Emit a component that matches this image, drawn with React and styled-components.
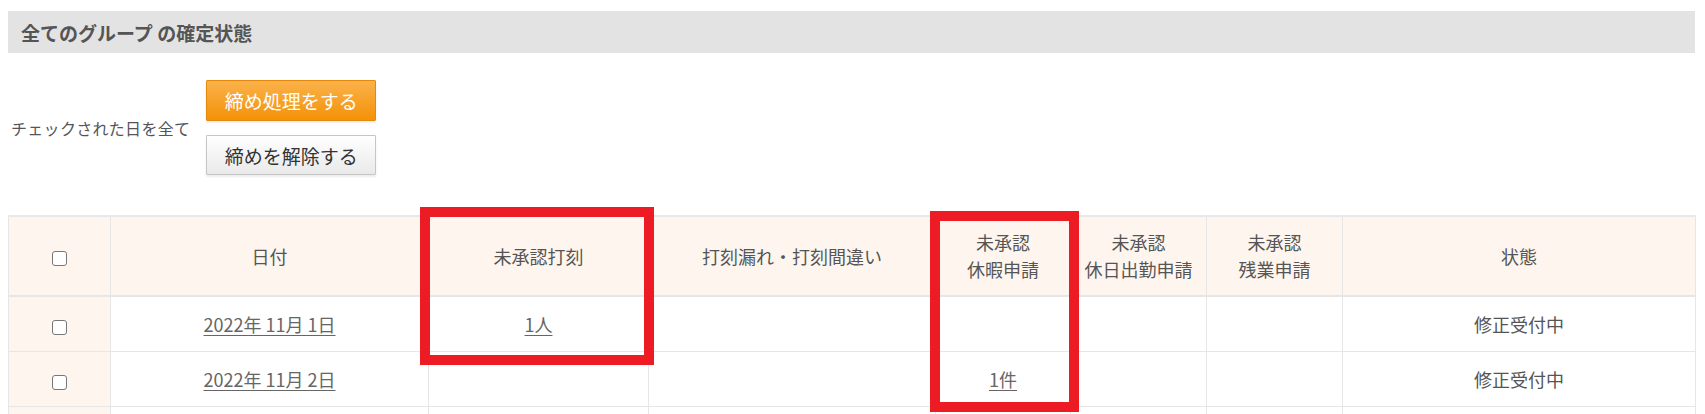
import React from "react";
import styled, { createGlobalStyle } from "styled-components";

const Global = createGlobalStyle`
  html, body { margin:0; padding:0; background:#fff; }
  body { font-family:"Noto Sans CJK JP", "Noto Sans", sans-serif; color:#555; }
`;

const Page = styled.div`
  padding:11px 10px 0 8px;
  height:414px;
  box-sizing:border-box;
  overflow:hidden;
`;

const TitleBar = styled.div`
  background:#e3e3e3;
  height:42px;
  display:flex;
  align-items:center;
  padding-left:13px;
  font-size:19px;
  font-weight:700;
  color:#555;
`;

const Controls = styled.div`
  display:flex;
  align-items:center;
  gap:16px;
  margin-top:27px;
  padding-left:3px;
`;

const Label = styled.div`font-size:16px; letter-spacing:0.3px; color:#555;`;

const BtnStack = styled.div`
  display:flex;
  flex-direction:column;
  gap:14px;
`;

const Btn = styled.button`
  font-family:inherit;
  font-size:19px;
  width:170px;
  height:${p => (p.primary ? "41px" : "40px")};
  padding:0;
  border-radius:1px;
  cursor:pointer;
  border:1px solid ${p => (p.primary ? "#e5890e" : "#c6c6c6")};
  color:${p => (p.primary ? "#fff" : "#333")};
  background:${p =>
    p.primary
      ? "linear-gradient(180deg, #fbb24a 0%, #f39208 100%)"
      : "linear-gradient(180deg, #ffffff 0%, #e9e9e9 100%)"};
  box-shadow:0 2px 2px rgba(0,0,0,0.08);
`;

const TableWrap = styled.div`
  position:relative;
  margin-top:40px;
`;

const Table = styled.table`
  width:1687px;
  table-layout:fixed;
  border-collapse:collapse;
  font-size:18px;
  color:#555;
  border-top:2px solid #e8e8e8;
`;

const Th = styled.th`
  font-weight:400;
  background:#fef5ef;
  border:1px solid #e6e6e6;
  border-bottom:2px solid #e6e6e6;
  height:78px;
  line-height:27px;
  text-align:center;
  padding:0;
`;

const Td = styled.td`
  border:1px solid #e6e6e6;
  height:54px;
  text-align:center;
  padding:0;
  background:${p => (p.check ? "#fef5ef" : "#fff")};
`;

const Box = styled.span`
  display:inline-block;
  width:13px;
  height:13px;
  border:1.5px solid #777;
  border-radius:3px;
  background:#fff;
  vertical-align:middle;
`;

const Link = styled.a`
  color:#666;
  text-decoration:underline;
  text-underline-offset:3px;
`;

const Mark = styled.div`
  position:absolute;
  border:10px solid #ed1c24;
  box-sizing:border-box;
  pointer-events:none;
`;

const cols = [102, 318, 220, 287, 135, 136, 136, 353];

const rows = [
  { date: "2022年 11月 1日", punch: "1人", leave: "", status: "修正受付中" },
  { date: "2022年 11月 2日", punch: "", leave: "1件", status: "修正受付中" },
  { date: "", punch: "", leave: "", status: "" },
];

export default function App() {
  return (
    <Page>
      <Global />
      <TitleBar>全てのグループ の確定状態</TitleBar>

      <Controls>
        <Label>チェックされた日を全て</Label>
        <BtnStack>
          <Btn primary>締め処理をする</Btn>
          <Btn>締めを解除する</Btn>
        </BtnStack>
      </Controls>

      <TableWrap>
        <Table>
          <colgroup>
            {cols.map((w, i) => <col key={i} style={{ width: w }} />)}
          </colgroup>
          <thead>
            <tr>
              <Th><Box /></Th>
              <Th>日付</Th>
              <Th>未承認打刻</Th>
              <Th>打刻漏れ・打刻間違い</Th>
              <Th>未承認<br />休暇申請</Th>
              <Th>未承認<br />休日出勤申請</Th>
              <Th>未承認<br />残業申請</Th>
              <Th>状態</Th>
            </tr>
          </thead>
          <tbody>
            {rows.map((r, i) => (
              <tr key={i}>
                <Td check>{r.date && <Box />}</Td>
                <Td>{r.date && <Link href="#">{r.date}</Link>}</Td>
                <Td>{r.punch && <Link href="#">{r.punch}</Link>}</Td>
                <Td />
                <Td>{r.leave && <Link href="#">{r.leave}</Link>}</Td>
                <Td />
                <Td />
                <Td>{r.status}</Td>
              </tr>
            ))}
          </tbody>
        </Table>

        <Mark style={{ left: 412, top: -8, width: 234, height: 158 }} />
        <Mark style={{ left: 922, top: -4, width: 149, height: 201 }} />
      </TableWrap>
    </Page>
  );
}
